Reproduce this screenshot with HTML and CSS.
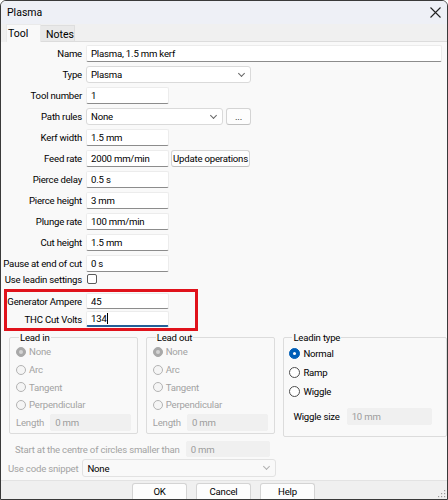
FILE: index.html
```html
<!DOCTYPE html>
<html>
<head>
<meta charset="utf-8">
<link rel="stylesheet" href="styles.css">
</head>
<body>
<div class="window">
  <div class="titlebar">
    <span class="title">Plasma</span>
    <svg class="close" width="11" height="11" viewBox="0 0 11 11"><path d="M0.5 0.5 L10.5 10.5 M10.5 0.5 L0.5 10.5" stroke="#222" stroke-width="1.1" fill="none"/></svg>
  </div>
  <div class="tabs">
    <div class="tab active">Tool</div>
    <div class="tab">Notes</div>
    <div class="tabfill"></div>
  </div>
  <div class="content">
    <div class="form">
      <div class="row"><span class="lbl">Name</span><div class="input wide">Plasma, 1.5 mm kerf</div></div>
      <div class="row"><span class="lbl">Type</span><div class="select type">Plasma<span class="chev"></span></div></div>
      <div class="row"><span class="lbl">Tool number</span><div class="input">1</div></div>
      <div class="row"><span class="lbl">Path rules</span><div class="select rules">None<span class="chev"></span></div><div class="btn dots">...</div></div>
      <div class="row"><span class="lbl">Kerf width</span><div class="input">1.5 mm</div></div>
      <div class="row"><span class="lbl">Feed rate</span><div class="input">2000 mm/min</div><div class="btn upd">Update operations</div></div>
      <div class="row"><span class="lbl">Pierce delay</span><div class="input">0.5 s</div></div>
      <div class="row"><span class="lbl">Pierce height</span><div class="input">3 mm</div></div>
      <div class="row"><span class="lbl">Plunge rate</span><div class="input">100 mm/min</div></div>
      <div class="row"><span class="lbl">Cut height</span><div class="input">1.5 mm</div></div>
      <div class="row"><span class="lbl">Pause at end of cut</span><div class="input">0 s</div></div>
      <div class="row check"><span class="lbl">Use leadin settings</span><span class="checkbox"></span></div>
      <div class="highlight">
        <div class="row"><span class="lbl">Generator Ampere</span><div class="input">45</div></div>
        <div class="row"><span class="lbl">THC Cut Volts</span><div class="input focus">134<span class="caret"></span></div></div>
      </div>
    </div>

    <div class="groups">
      <fieldset class="group g1">
        <legend>Lead in</legend>
        <div class="opt dis"><span class="radio on"></span>None</div>
        <div class="opt dis"><span class="radio"></span>Arc</div>
        <div class="opt dis"><span class="radio"></span>Tangent</div>
        <div class="opt dis"><span class="radio"></span>Perpendicular</div>
        <div class="len"><span class="dlbl">Length</span><div class="input disabled lenin">0 mm</div></div>
      </fieldset>
      <fieldset class="group g2">
        <legend>Lead out</legend>
        <div class="opt dis"><span class="radio on"></span>None</div>
        <div class="opt dis"><span class="radio"></span>Arc</div>
        <div class="opt dis"><span class="radio"></span>Tangent</div>
        <div class="opt dis"><span class="radio"></span>Perpendicular</div>
        <div class="len"><span class="dlbl">Length</span><div class="input disabled lenin">0 mm</div></div>
      </fieldset>
      <fieldset class="group g3">
        <legend>Leadin type</legend>
        <div class="opt en"><span class="radio on"></span>Normal</div>
        <div class="opt en"><span class="radio"></span>Ramp</div>
        <div class="opt en"><span class="radio"></span>Wiggle</div>
        <div class="wig"><span class="wlbl">Wiggle size</span><div class="input disabled wigin">10 mm</div></div>
      </fieldset>
    </div>

    <div class="startrow"><span class="dlbl">Start at the centre of circles smaller than</span><div class="input disabled startin">0 mm</div></div>
    <div class="snippet"><span class="dlbl">Use code snippet</span><div class="select disabled snipsel">None<span class="chev"></span></div></div>
  </div>
  <div class="bottombar">
    <div class="btn b">OK</div>
    <div class="btn b">Cancel</div>
    <div class="btn b">Help</div>
    <svg class="grip" width="8" height="8" viewBox="0 0 8 8"><g fill="#9a9a9a"><rect x="6" y="0" width="1.2" height="1.2"/><rect x="3" y="3" width="1.2" height="1.2"/><rect x="6" y="3" width="1.2" height="1.2"/><rect x="0" y="6" width="1.2" height="1.2"/><rect x="3" y="6" width="1.2" height="1.2"/><rect x="6" y="6" width="1.2" height="1.2"/></g></svg>
  </div>
</div>
</body>
</html>
```
FILE: styles.css
```css
* { box-sizing: border-box; }
body { margin: 0; background: #ffffff; font-family: Roboto, "Liberation Sans", sans-serif; font-size: 9.6px; letter-spacing: -0.2px; color: #000; }
.window { width: 448px; height: 500px; border: 1px solid #3a3a3a; border-radius: 6px 6px 0 0; background: #f9f9f9; display: flex; flex-direction: column; overflow: hidden; }
.titlebar { height: 23px; flex: none; background: #eef0f6; display: flex; align-items: center; padding: 0 6px 0 6px; }
.title { font-size: 10.5px; flex: 1; letter-spacing: 0; }
.tabs { height: 18px; flex: none; background: #f0f0f0; display: flex; align-items: stretch; padding-left: 5px; }
.tab { padding: 2px 6px 0; font-size: 10.5px; letter-spacing: 0; border-bottom: 1px solid #dcdcdc; }
.tab.active { background: #f9f9f9; border: 1px solid #eaeaea; border-bottom: none; width: 35px; padding-left: 1px; }
.tab:not(.active) { background: #e9e9e9; border-top: 1px solid #dedede; border-right: 1px solid #dedede; margin-top: 1px; width: 34px; padding-left: 5px; }
.tabfill { flex: 1; border-bottom: 1px solid #dcdcdc; }
.content { flex: 1; padding: 3px 0 0 2px; }
.form { display: flex; flex-direction: column; gap: 4px; }
.row { display: flex; align-items: center; height: 17px; gap: 4px; flex: none; }
.lbl { width: 79px; text-align: right; white-space: nowrap; flex: none; }
.input { height: 17px; width: 83px; background: #fff; border: 1px solid #ececec; border-bottom: 1px solid #8c8c8c; border-radius: 2px; padding-left: 4px; display: flex; align-items: center; white-space: nowrap; flex: none; }
.input.wide { width: 356px; }
.input.focus { border-bottom: 2px solid #245f98; }
.caret { display: inline-block; width: 1px; height: 11px; background: #000; margin-left: 0.5px; }
.input.disabled { background: #f0f0f0; border: 1px solid #f0f0f0; color: #9c9c9c; }
.select { height: 17px; background: #fff; border: 1px solid #dadada; border-radius: 3px; padding-left: 4px; display: flex; align-items: center; position: relative; flex: none; }
.select.type { width: 165px; }
.select.rules { width: 137px; }
.chev { position: absolute; right: 6px; top: 4px; width: 5px; height: 5px; border-right: 1px solid #666; border-bottom: 1px solid #666; transform: rotate(45deg); }
.btn { height: 17px; background: #fdfdfd; border: 1px solid #d4d4d4; border-bottom-color: #c0c0c0; border-radius: 3px; display: flex; align-items: center; justify-content: center; white-space: nowrap; flex: none; }
.dots { width: 25px; margin-left: -1px; }
.upd { margin-left: -2px; padding: 0 2px; width: 79px; }
.check { height: 14px; margin-top: -4px; }
.checkbox { width: 10px; height: 10px; border: 1px solid #5a5a5a; border-radius: 2px; background: #fff; margin-left: 1px; }
.highlight { width: 186px; margin-left: 5px; margin-top: 3px; outline: 3px solid #e0121b; outline-offset: 1px; display: flex; flex-direction: column; gap: 2px; }
.highlight .row { margin-left: -5px; height: 16px; }
.highlight .input { height: 16px; }
.groups { display: flex; gap: 8px; margin: 5px 0 0 6px; align-items: flex-start; }
.group { border: 1px solid #dcdcdc; border-radius: 2px; margin: 0; padding: 0 0 0 6px; display: flex; flex-direction: column; min-width: 0; }
.group legend { padding: 0 1px; margin-left: 3px; color: #000; }
.g1 { width: 129px; height: 102px; }
.g2 { width: 130px; height: 102px; }
.g3 { width: 164px; height: 105px; padding-left: 5px; padding-top: 1px; }
.opt { display: flex; align-items: center; gap: 3px; height: 17.7px; flex: none; }
.opt.dis { color: #a3a3a3; }
.radio { width: 10px; height: 10px; border-radius: 50%; border: 1px solid #b3b3b3; background: #f5f5f5; position: relative; flex: none; }
.opt.dis .radio.on { background: #a9a9a9; border-color: #a9a9a9; }
.opt.dis .radio.on::after { content: ""; position: absolute; left: 2px; top: 2px; width: 4px; height: 4px; border-radius: 50%; background: #d4d4d4; }
.opt.en .radio { border-color: #4d4d4d; background: #fff; width: 11px; height: 11px; }
.opt.en .radio.on { background: #005fb8; border-color: #005fb8; }
.opt.en .radio.on::after { content: ""; position: absolute; left: 3px; top: 3px; width: 3px; height: 3px; border-radius: 50%; background: #fff; }
.opt.en { height: 19px; }
.len { display: flex; align-items: center; gap: 6px; margin-top: 0; flex: none; }
.dlbl { color: #a3a3a3; white-space: nowrap; }
.lenin { width: 81px; }
.wig { display: flex; align-items: center; gap: 7px; margin: 7px 0 0 4px; flex: none; }
.wigin { width: 85px; }
.startrow { display: flex; align-items: center; gap: 6px; margin: 4px 0 0 12px; height: 16px; }
.startin { width: 84px; height: 16px; }
.snippet { display: flex; align-items: center; gap: 4px; margin: 2px 0 0 5px; }
.snipsel { width: 194px; height: 18px; background: #f9f9f9; border-color: #e2e2e2; }
.snipsel .chev { border-color: #b0b0b0; }
.bottombar { height: 19px; flex: none; background: #f0f0f0; border-top: 1px solid #e3e3e3; display: flex; gap: 9px; padding: 2px 0 0 131px; position: relative; }
.btn.b { width: 55px; height: 17px; border-radius: 3px 3px 0 0; }
.grip { position: absolute; right: 1px; bottom: 1px; }
```
